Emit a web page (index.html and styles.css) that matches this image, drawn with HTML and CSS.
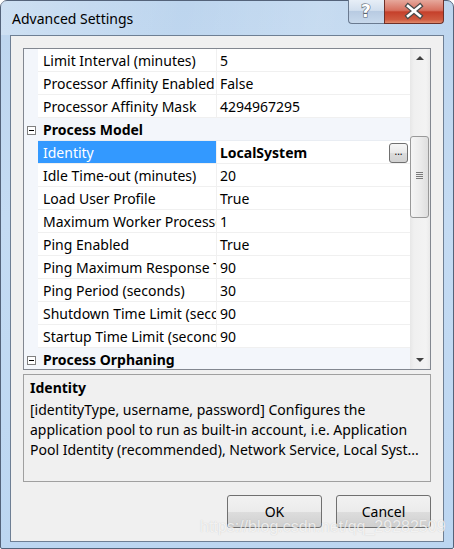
FILE: index.html
```html
<!DOCTYPE html>
<html>
<head>
<meta charset="utf-8">
<link rel="stylesheet" href="styles.css">
</head>
<body>
<div class="window">
  <div class="titlebar">
    <span class="title">Advanced Settings</span>
    <div class="caption">
      <div class="cap-help"><svg width="34" height="22" viewBox="0 0 34 22"><text x="17" y="17" text-anchor="middle" class="qmark">?</text></svg></div>
      <div class="cap-close"><svg width="58" height="22" viewBox="0 0 58 22"><path d="M23 6 L35 16 M35 6 L23 16" stroke="#4a4a4a" stroke-width="5" stroke-linecap="square"/><path d="M23 6 L35 16 M35 6 L23 16" stroke="#ffffff" stroke-width="2.6" stroke-linecap="square"/></svg></div>
    </div>
  </div>
  <div class="client">
    <div class="grid">
      <div class="rows">
        <div class="row"><div class="margin"></div><div class="name">Limit Interval (minutes)</div><div class="value">5</div></div>
        <div class="row"><div class="margin"></div><div class="name">Processor Affinity Enabled</div><div class="value">False</div></div>
        <div class="row"><div class="margin"></div><div class="name">Processor Affinity Mask</div><div class="value">4294967295</div></div>
        <div class="cat"><div class="margin"><span class="toggle"></span></div><div class="cat-label">Process Model</div></div>
        <div class="row"><div class="margin"></div><div class="name selected">Identity</div><div class="value strong">LocalSystem<span class="dots">...</span></div></div>
        <div class="row"><div class="margin"></div><div class="name">Idle Time-out (minutes)</div><div class="value">20</div></div>
        <div class="row"><div class="margin"></div><div class="name">Load User Profile</div><div class="value">True</div></div>
        <div class="row"><div class="margin"></div><div class="name">Maximum Worker Processes</div><div class="value">1</div></div>
        <div class="row"><div class="margin"></div><div class="name">Ping Enabled</div><div class="value">True</div></div>
        <div class="row"><div class="margin"></div><div class="name">Ping Maximum Response Time (seconds)</div><div class="value">90</div></div>
        <div class="row"><div class="margin"></div><div class="name">Ping Period (seconds)</div><div class="value">30</div></div>
        <div class="row"><div class="margin"></div><div class="name">Shutdown Time Limit (seconds)</div><div class="value">90</div></div>
        <div class="row"><div class="margin"></div><div class="name">Startup Time Limit (seconds)</div><div class="value">90</div></div>
        <div class="cat"><div class="margin"><span class="toggle"></span></div><div class="cat-label">Process Orphaning</div></div>
      </div>
      <div class="scrollbar">
        <div class="arrow-up"></div>
        <div class="track">
          <div class="thumb"><span class="grip"></span></div>
        </div>
        <div class="arrow-down"></div>
      </div>
    </div>
    <div class="desc">
      <div class="desc-title">Identity</div>
      <div class="desc-line">[identityType, username, password] Configures the</div>
      <div class="desc-line">application pool to run as built-in account, i.e. Application</div>
      <div class="desc-line">Pool Identity (recommended), Network Service, Local Syst...</div>
    </div>
    <div class="buttons">
      <div class="btn">OK</div>
      <div class="btn">Cancel</div>
    </div>
  </div>
</div>
<div class="watermark">https://blog.csdn.net/qq_29282509</div>
</body>
</html>
```
FILE: styles.css
```css
html, body {
  margin: 0;
  padding: 0;
  background: #ffffff;
}
body {
  width: 454px;
  height: 549px;
  position: relative;
  overflow: hidden;
  font-family: "Noto Sans", "Open Sans", sans-serif;
  font-size: 14px;
  color: #000;
}
.window {
  box-sizing: border-box;
  width: 454px;
  height: 549px;
  border: 1px solid #54637a;
  border-radius: 7px 7px 2px 2px;
  background: linear-gradient(180deg, #bdd5ee 0%, #c4dbf3 40%, #bcd6f1 100%);
  padding: 0 9px 6px 9px;
  display: flex;
  flex-direction: column;
}
.titlebar {
  height: 34px;
  flex: none;
  display: flex;
  justify-content: space-between;
  align-items: flex-start;
  background: linear-gradient(100deg, rgba(255,255,255,0.25) 0%, rgba(255,255,255,0.0) 40%, rgba(255,255,255,0.15) 70%, rgba(255,255,255,0) 100%);
  margin: 0 -9px;
  padding: 0 9px 0 2px;
}
.title {
  margin-top: 8px;
  margin-left: 9px;
  font-size: 14px;
  line-height: 20px;
  color: #000;
}
.caption {
  display: flex;
  margin-top: -1px;
}
.cap-help {
  box-sizing: border-box;
  width: 36px;
  height: 24px;
  border: 1px solid #6a7a90;
  border-top: none;
  border-right: none;
  border-radius: 0 0 0 4px;
  background: linear-gradient(180deg, #e7eef7 0%, #d2dfee 45%, #b8cbe2 50%, #c8d9ec 100%);
}
.cap-help svg, .cap-close svg { display: block; }
.qmark {
  font-family: "DejaVu Sans", sans-serif;
  font-size: 17px;
  font-weight: bold;
  fill: #ffffff;
  stroke: #5a6573;
  stroke-width: 1.2px;
  paint-order: stroke;
}
.cap-close {
  box-sizing: border-box;
  width: 60px;
  height: 24px;
  border: 1px solid #6e3028;
  border-top: none;
  border-radius: 0 0 4px 0;
  background: linear-gradient(180deg, #e6a89c 0%, #d7705f 45%, #c5402b 52%, #cf5a40 85%, #e08a6c 100%);
}
.client {
  flex: 1;
  box-sizing: border-box;
  border: 1px solid #6e7f94;
  background: #f0f0f0;
  padding: 12px 12px 0 12px;
  display: flex;
  flex-direction: column;
}
.grid {
  box-sizing: border-box;
  height: 322px;
  border: 1px solid #828790;
  background: #ffffff;
  display: flex;
  overflow: hidden;
  flex: none;
}
.rows {
  flex: 1;
  overflow: hidden;
}
.row, .cat {
  display: flex;
  height: 23px;
}
.margin {
  width: 14px;
  flex: none;
  background: #f3f6fb;
  position: relative;
}
.name {
  box-sizing: border-box;
  width: 179px;
  flex: none;
  padding: 2px 0 0 5px;
  border-right: 1px solid #f0f0f0;
  border-bottom: 1px solid #f0f0f0;
  line-height: 20px;
  white-space: nowrap;
  overflow: hidden;
}
.name.selected {
  background: #3399ff;
  color: #ffffff;
}
.value {
  box-sizing: border-box;
  flex: 1;
  padding: 2px 0 0 3px;
  border-bottom: 1px solid #f0f0f0;
  line-height: 20px;
  white-space: nowrap;
  overflow: hidden;
  position: relative;
}
.value.strong {
  font-weight: bold;
}
.dots {
  position: absolute;
  right: 2px;
  top: 2px;
  box-sizing: border-box;
  width: 19px;
  height: 20px;
  border: 1px solid #707070;
  border-radius: 3px;
  background: linear-gradient(180deg, #f6f6f6 0%, #e9e9e9 50%, #dcdcdc 51%, #d2d2d2 100%);
  font-weight: normal;
  font-size: 10px;
  line-height: 14px;
  text-align: center;
  color: #000;
}
.cat {
  background: #f3f6fb;
}
.cat-label {
  flex: 1;
  padding: 2px 0 0 5px;
  font-weight: bold;
  line-height: 20px;
  border-bottom: 1px solid #e9edf3;
}
.toggle {
  position: absolute;
  left: 3px;
  top: 8px;
  box-sizing: border-box;
  width: 9px;
  height: 9px;
  border: 1px solid #808080;
  background: #ffffff;
}
.toggle::after {
  content: "";
  position: absolute;
  left: 1px;
  top: 3px;
  width: 5px;
  height: 1px;
  background: #000;
}
.scrollbar {
  width: 20px;
  flex: none;
  background: linear-gradient(90deg, #e7e7e7 0%, #f0f0f0 20%, #f3f3f3 80%, #eaeaea 100%);
  display: flex;
  flex-direction: column;
}
.arrow-up, .arrow-down {
  height: 17px;
  flex: none;
  position: relative;
}
.arrow-up::after, .arrow-down::after {
  content: "";
  position: absolute;
  left: 6px;
  width: 0;
  height: 0;
  border-left: 4px solid transparent;
  border-right: 4px solid transparent;
}
.arrow-up::after {
  top: 7px;
  border-bottom: 4px solid #404040;
}
.arrow-down::after {
  top: 6px;
  border-top: 4px solid #404040;
}
.track {
  flex: 1;
  position: relative;
}
.thumb {
  position: absolute;
  left: 0;
  top: 70px;
  box-sizing: border-box;
  width: 19px;
  height: 82px;
  border: 1px solid #999999;
  border-radius: 3px;
  background: linear-gradient(90deg, #f5f5f5 0%, #ececec 50%, #dedede 100%);
}
.grip {
  position: absolute;
  left: 5px;
  top: 35px;
  width: 7px;
  height: 7px;
  background: repeating-linear-gradient(180deg, #7a7a7a 0, #7a7a7a 1px, transparent 1px, transparent 2px);
}
.desc {
  box-sizing: border-box;
  margin-top: 4px;
  height: 108px;
  border: 1px solid #a0a0a0;
  padding: 1px 6px 0 6px;
  flex: none;
}
.desc-title {
  font-weight: bold;
  line-height: 24px;
}
.desc-line {
  line-height: 20px;
  white-space: nowrap;
}
.buttons {
  display: flex;
  justify-content: flex-end;
  gap: 14px;
  margin-top: 13px;
}
.btn {
  box-sizing: border-box;
  width: 95px;
  height: 33px;
  border: 1px solid #707070;
  border-radius: 3px;
  background: linear-gradient(180deg, #f2f2f2 0%, #ebebeb 50%, #dddddd 51%, #cfcfcf 100%);
  text-align: center;
  line-height: 31px;
  font-size: 14px;
}
.watermark {
  position: absolute;
  left: 200px;
  top: 518px;
  font-family: "Liberation Sans", Arial, sans-serif;
  font-size: 16px;
  color: rgba(255,255,255,0.75);
  text-shadow: 0 0 1px rgba(120,120,120,0.35);
  white-space: nowrap;
}
```
